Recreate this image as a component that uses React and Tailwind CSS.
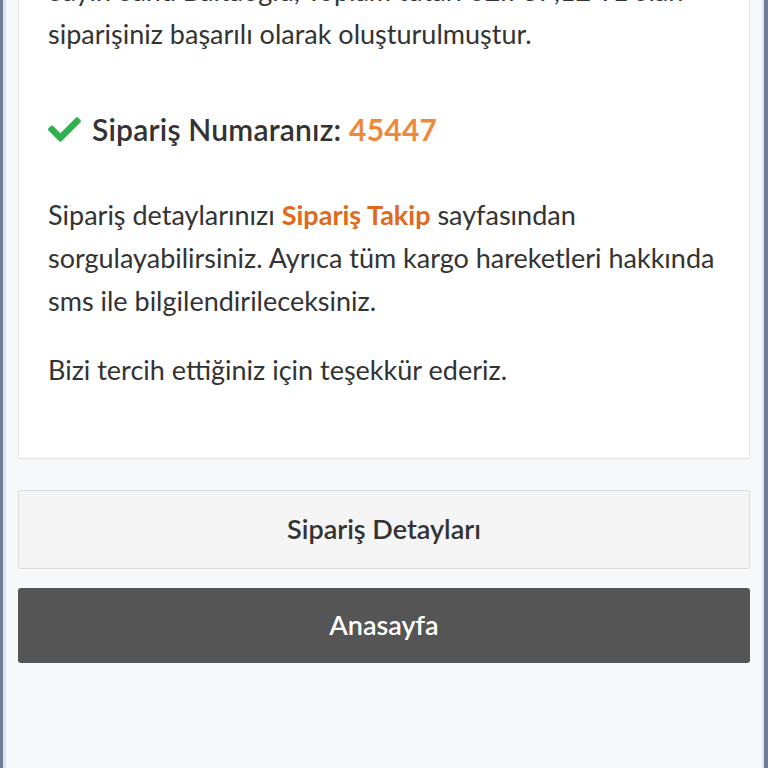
import React from "react";

const CheckIcon = () => (
  <svg viewBox="0 0 512 512" className="w-[33px] h-[33px] fill-[#2fb14f] shrink-0">
    <path d="M173.898 439.404l-166.4-166.4c-9.997-9.997-9.997-26.206 0-36.204l36.203-36.204c9.997-9.998 26.207-9.998 36.204 0L192 312.69 432.095 72.596c9.997-9.997 26.207-9.997 36.204 0l36.203 36.204c9.997 9.997 9.997 26.206 0 36.204l-294.4 294.401c-9.998 9.997-26.207 9.997-36.204-.001z" />
  </svg>
);

export default function App() {
  return (
    <div className="flex h-[768px] overflow-hidden bg-[#7b8ca0]" style={{ fontFamily: "Lato, 'Open Sans', sans-serif" }}>
      <div className="w-[3px] bg-[#6d7d90]" />
      <div className="w-[3px] bg-[#dde6f0]" />
      <div className="flex-1 bg-[#f7f8fa] px-[12px] text-[#333]">
        <div className="bg-white border border-[#e3e3e3] border-t-0 px-[29px] pb-[67px] text-[27px] leading-[43px]">
          <p className="-mt-[31px]">
            Sayın Sahu Baltaoğlu, Toplam tutarı 62.787,12 TL olan siparişiniz başarılı olarak oluşturulmuştur.
          </p>
          <div className="flex items-center gap-[11px] mt-[54px] mb-[44px]">
            <CheckIcon />
            <div className="text-[30px] font-semibold leading-[40px] tracking-[0.2px]">
              Sipariş Numaranız: <span className="text-[#f0883a] font-bold">45447</span>
            </div>
          </div>
          <p>
            Sipariş detaylarınızı <span className="text-[#e0691b] font-bold">Sipariş Takip</span> sayfasından sorgulayabilirsiniz. Ayrıca tüm kargo hareketleri hakkında sms ile bilgilendirileceksiniz.
          </p>
          <p className="mt-[26px]">Bizi tercih ettiğiniz için teşekkür ederiz.</p>
        </div>
        <button className="mt-[31px] w-full h-[79px] bg-[#f5f5f5] border border-[#dcdcdc] rounded-[3px] text-[27px] font-semibold text-[#333]">
          Sipariş Detayları
        </button>
        <button className="mt-[19px] w-full h-[75px] bg-[#555] rounded-[3px] text-[27px] font-semibold text-white">
          Anasayfa
        </button>
      </div>
      <div className="w-[2px] bg-[#dde6f0]" />
      <div className="w-[4px] bg-[#6d7d90]" />
    </div>
  );
}
